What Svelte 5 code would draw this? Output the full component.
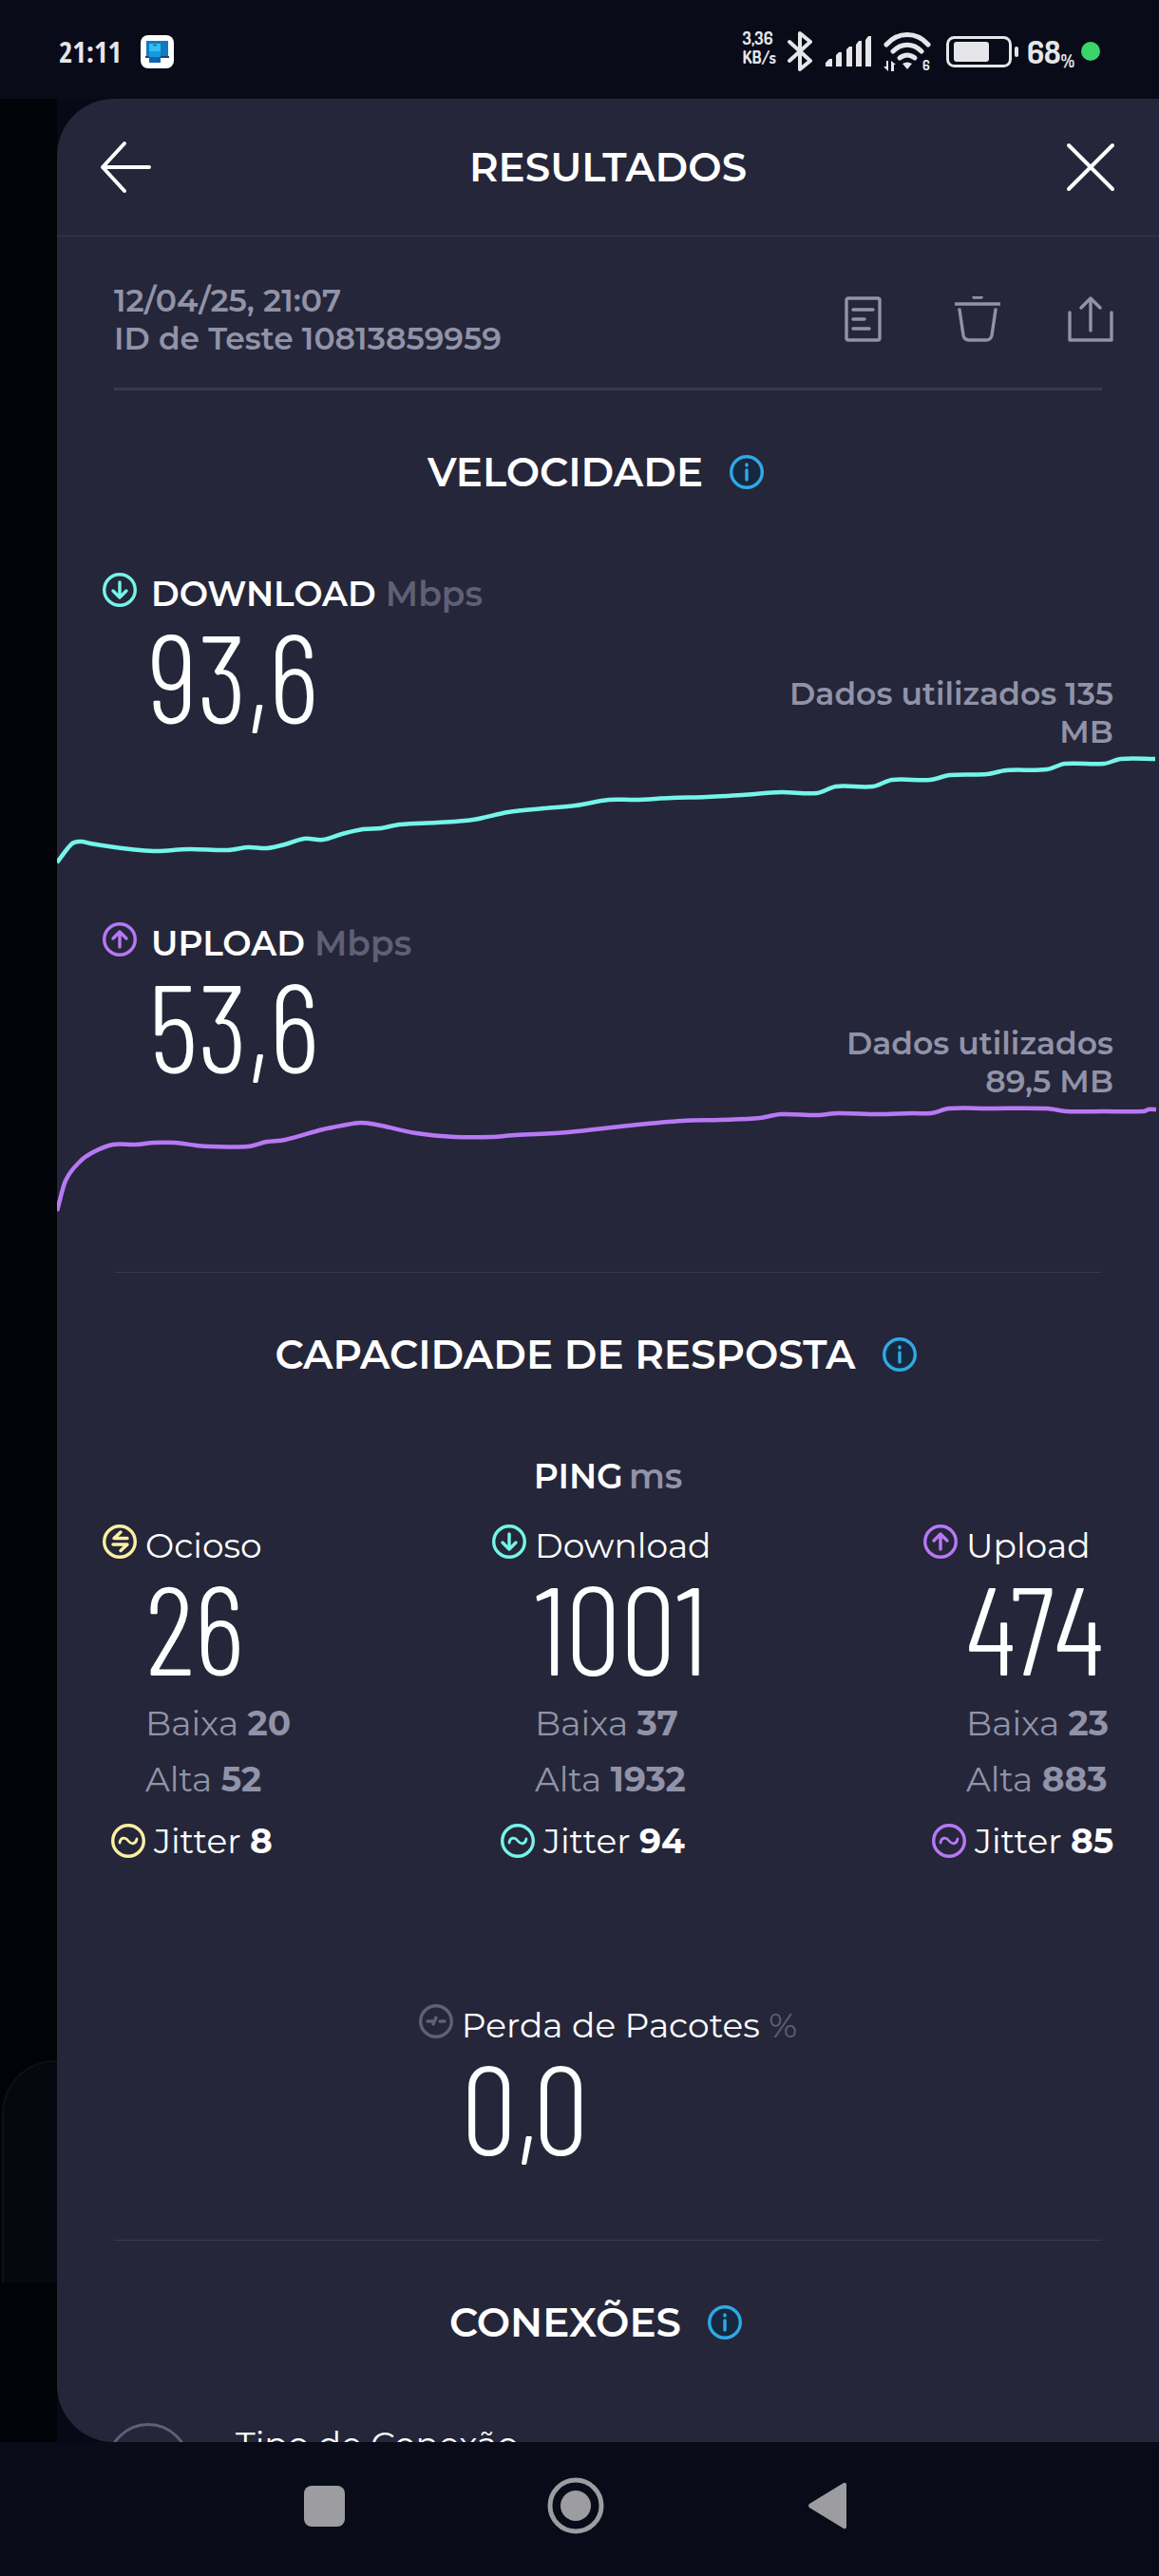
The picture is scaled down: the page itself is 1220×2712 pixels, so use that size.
<script lang="ts">
  type Point = [number, number];
  type Kind = "idle" | "down" | "up";

  const speeds: { kind: Kind; label: string; value: string; data: string; points: Point[] }[] = [
    {
      kind: "down",
      label: "DOWNLOAD",
      value: "93,6",
      data: "Dados utilizados 135 MB",
      points: [
        [0, 118], [16, 98], [26, 96], [35, 98], [61, 102], [87, 105], [106, 106], [139, 104],
        [180, 105], [201, 102], [221, 103], [240, 99], [260, 93], [280, 94], [300, 88], [322, 83],
        [341, 82], [361, 78], [400, 76], [438, 73], [475, 65], [512, 61], [546, 58], [581, 52],
        [609, 52], [647, 50], [684, 49], [721, 47], [762, 44], [800, 45], [820, 38], [859, 38],
        [879, 31], [919, 31], [940, 26], [979, 25], [999, 21], [1042, 20], [1061, 14], [1102, 14],
        [1120, 9], [1156, 9],
      ],
    },
    {
      kind: "up",
      label: "UPLOAD",
      value: "53,6",
      data: "Dados utilizados 89,5 MB",
      points: [
        [0, 117], [9, 85], [24, 65], [38, 55], [59, 47], [83, 47], [102, 45], [124, 45], [147, 48],
        [162, 49], [201, 49], [221, 44], [240, 42], [280, 31], [300, 27], [320, 24], [341, 27],
        [378, 35], [419, 39], [456, 39], [482, 37], [538, 34], [602, 27], [658, 22], [699, 21],
        [740, 19], [762, 15], [800, 16], [822, 14], [863, 15], [900, 14], [920, 14], [939, 9],
        [979, 9], [1042, 9], [1062, 12], [1102, 12], [1144, 12], [1149, 10], [1157, 10],
      ],
    },
  ];

  const pings: { kind: Kind; label: string; value: number; low: number; high: number; jitter: number }[] = [
    { kind: "idle", label: "Ocioso", value: 26, low: 20, high: 52, jitter: 8 },
    { kind: "down", label: "Download", value: 1001, low: 37, high: 1932, jitter: 94 },
    { kind: "up", label: "Upload", value: 474, low: 23, high: 883, jitter: 85 },
  ];

  // rounds the corners a little, flat runs stay flat
  function linePath(points: Point[]) {
    let d = `M${points[0]}`;
    for (let i = 1; i < points.length; i++) {
      const [x0, y0] = points[i - 1];
      const [x1, y1] = points[i];
      const third = (x1 - x0) / 3;
      const slope0 = i > 1 ? (y1 - points[i - 2][1]) / (x1 - points[i - 2][0]) : (y1 - y0) / (x1 - x0);
      const slope1 = i < points.length - 1 ? (points[i + 1][1] - y0) / (points[i + 1][0] - x0) : 0;
      d += `C${x0 + third} ${y0 + slope0 * third} ${x1 - third} ${y1 - slope1 * third} ${x1} ${y1}`;
    }
    return d;
  }
</script>

{#snippet badge(kind: Kind | "muted")}
  <svg class="badge {kind}" viewBox="0 0 36 36" aria-hidden="true">
    <circle cx="18" cy="18" r="16.3" />
    {#if kind === "down"}
      <path d="M18 10v15M11 19l7 7 7-7" />
    {:else if kind === "up"}
      <path d="M18 26V11M11 17l7-7 7 7" />
    {:else if kind === "idle"}
      <path d="M26 14.500H12l7-6.500M11 21h15l-7 6.500" />
    {:else}
      <path d="M9 18h6M15 21l3-7M22 18h5" />
    {/if}
  </svg>
{/snippet}

{#snippet jitterBadge(kind: Kind)}
  <svg class="badge {kind}" viewBox="0 0 36 36" aria-hidden="true">
    <circle cx="18" cy="18" r="16.3" />
    <path class="wave" d="M9 20c1-6 6-6 9-2s8 4 9-2" />
  </svg>
{/snippet}

{#snippet sectionTitle(text: string)}
  <div class="section-title">
    <h2>{text}</h2>
    <button class="info" aria-label="Informações">
      <svg viewBox="0 0 36 36">
        <circle cx="18" cy="18" r="16.3" />
        <path d="M18 16v10M18 10v1" />
      </svg>
    </button>
  </div>
{/snippet}

<div class="phone">
  <div class="status">
    <span class="clock">21:11</span>
    <svg class="app" viewBox="0 0 35 35">
      <rect width="35" height="35" rx="8" fill="#fff" />
      <path d="M6 6h23v17H6z" fill="#1779bd" />
      <path d="M5 22h25v2H5z" fill="#164a78" />
      <path d="M9 9h12v14H9z" fill="#35bdf4" />
      <path d="M9 17h12v6H9z" fill="#159ae2" />
      <path d="M9 23h12v6H9z" fill="#1464ad" />
      <path d="M13 10h4v1h-4z" fill="#164a78" />
    </svg>
    <span class="rate">3,36<br />KB/s</span>
    <svg class="bluetooth" viewBox="0 0 26 42">
      <path d="M2 11l22 20-11 9V2l11 9L2 31" fill="none" stroke="#e6e6ea" stroke-width="4" stroke-linejoin="round" stroke-linecap="round" />
    </svg>
    <svg class="signal" viewBox="0 0 49 32" fill="#e6e6ea">
      <path d="M0 32v-4l4-4h3v8zM11 32V20l3-3h3v15zM22 32V14l3-3h3v21zM32 32V9l3-4h3v27zM42 32V4l3-4h3v32z" />
    </svg>
    <svg class="wifi" viewBox="0 0 50 42">
      <g fill="none" stroke="#e6e6ea" stroke-width="5" stroke-linecap="round">
        <path d="M3 14c12-14 32-14 44 0M10 21c9-9 21-9 30 0" />
        <path d="M17 28c5-4 11-4 16 0" />
      </g>
      <path d="M20 34q5-3 10 0l-5 6z" fill="#e6e6ea" />
      <path d="M5 31v11l-5-5h3v-6zM8 42V31l5 4h-2v7z" fill="#e6e6ea" />
      <text x="41" y="41">6</text>
    </svg>
    <svg class="battery" viewBox="0 0 77 33">
      <rect x="1.500" y="1.500" width="66" height="30" rx="7" fill="none" stroke="#e6e6ea" stroke-width="3" />
      <rect x="8" y="6" width="37" height="21" rx="3" fill="#e6e6ea" />
      <rect x="72" y="11" width="4" height="11" rx="2" fill="#e6e6ea" />
    </svg>
    <span class="percent">68<small>%</small></span>
    <span class="dot"></span>
  </div>

  <div class="stage">
    <div class="behind"></div>
    <main class="sheet">
      <header>
        <button aria-label="Voltar">
          <svg viewBox="0 0 56 56"><path d="M27 3L4 28l23 25M4 28h49" /></svg>
        </button>
        <h1>RESULTADOS</h1>
        <button aria-label="Fechar">
          <svg viewBox="0 0 56 56"><path d="M5 5l46 46M51 5L5 51" /></svg>
        </button>
      </header>

      <div class="meta">
        <p>12/04/25, 21:07<br />ID de Teste 10813859959</p>
        <div class="actions">
          <button aria-label="Detalhes">
            <svg viewBox="0 0 48 48"><path d="M7 2h31q2 0 2 2v40q0 2-2 2H7q-2 0-2-2V4q0-2 2-2zM12 14h21M12 24h12M12 34h17" /></svg>
          </button>
          <button aria-label="Excluir">
            <svg viewBox="0 0 48 48"><path d="M1 8h46M20 1h8M5 14l4 27q1 5 6 5h18q5 0 6-5l4-27" /></svg>
          </button>
          <button aria-label="Compartilhar">
            <svg viewBox="0 0 48 48"><path d="M2 17v29h44V17M24 36V3M14 12L24 2l10 10" /></svg>
          </button>
        </div>
      </div>
      <hr class="thick" />

      <section>
        {@render sectionTitle("VELOCIDADE")}
        <div class="speeds">
          {#each speeds as speed}
            <article>
              <div class="label wide">
                {@render badge(speed.kind)}
                <h3>{speed.label} <span class="unit">Mbps</span></h3>
              </div>
              <div class="reading">
                <span class="number">{speed.value}</span>
                <p class="data">{speed.data}</p>
              </div>
              <svg class="chart {speed.kind}" viewBox="0 0 1160 120" preserveAspectRatio="none" aria-hidden="true">
                <path d={linePath(speed.points)} />
              </svg>
            </article>
          {/each}
        </div>
      </section>
      <hr />

      <section>
        {@render sectionTitle("CAPACIDADE DE RESPOSTA")}
        <h3 class="ping">PING<span>ms</span></h3>
        <div class="pings">
          {#each pings as ping}
            <div>
              <div class="label">
                {@render badge(ping.kind)}
                <span>{ping.label}</span>
              </div>
              <span class="number">{ping.value}</span>
              <p class="range">Baixa <b>{ping.low}</b></p>
              <p class="range">Alta <b>{ping.high}</b></p>
              <div class="label jitter">
                {@render jitterBadge(ping.kind)}
                <span>Jitter <b>{ping.jitter}</b></span>
              </div>
            </div>
          {/each}
        </div>
        <div class="loss">
          <div class="label">
            {@render badge("muted")}
            <span>Perda de Pacotes <span class="unit">%</span></span>
          </div>
          <span class="number">0,0</span>
        </div>
      </section>
      <hr />

      <section>
        {@render sectionTitle("CONEXÕES")}
        <div class="connection">
          <span class="ring"></span>
          <span>Tipo de Conexão</span>
        </div>
      </section>
    </main>
  </div>

  <nav>
    <button aria-label="Recentes">
      <svg viewBox="0 0 60 60"><rect x="9" y="9" width="43" height="43" rx="8" /></svg>
    </button>
    <button aria-label="Início">
      <svg viewBox="0 0 60 60">
        <circle cx="30" cy="30" r="27" fill="none" stroke="#9c9ca1" stroke-width="5" />
        <circle cx="30" cy="30" r="16" />
      </svg>
    </button>
    <button aria-label="Retroceder">
      <svg viewBox="0 0 60 60"><path d="M11 28L47 6q3-1 3 2v44q0 3-3 2L11 32q-2-2 0-4z" /></svg>
    </button>
  </nav>
</div>

<style>
  :global(body) {
    margin: 0;
    background: #090b18;
  }

  .phone {
    height: 100vh;
    display: flex;
    flex-direction: column;
    color: #fff;
    font-family: Montserrat, Inter, sans-serif;
    font-size: 36px;
    line-height: 44px;
  }

  h1,
  h2,
  h3,
  p {
    margin: 0;
    font-size: inherit;
    font-weight: 600;
  }

  button {
    display: flex;
    padding: 0;
    border: 0;
    background: none;
    cursor: pointer;
  }

  svg {
    display: block;
    flex: none;
  }

  hr {
    height: 1px;
    margin: 0 60px;
    border: 0;
    background: #38394d;
  }

  hr.thick {
    height: 3px;
  }

  .status {
    display: flex;
    align-items: center;
    height: 108px;
    margin-bottom: -4px;
    padding: 0 62px;
    box-sizing: border-box;
    color: #e6e6ea;
    font-family: Dosis, "Roboto Condensed", Roboto, sans-serif;
    font-size: 33px;
    font-weight: 700;
  }

  .clock {
    font-family: "Open Sans Condensed", "Roboto Condensed", Roboto, sans-serif;
    font-size: 31px;
  }

  .app {
    width: 35px;
    height: 35px;
    margin-left: 20px;
  }

  .rate {
    margin-left: auto;
    font-size: 18px;
    line-height: 20px;
    padding-bottom: 8px;
  }

  .bluetooth {
    width: 26px;
    height: 42px;
    margin-left: 12px;
  }

  .signal {
    width: 49px;
    height: 32px;
    margin-left: 14px;
  }

  .wifi {
    width: 50px;
    height: 42px;
    margin-left: 12px;
  }

  .wifi text {
    fill: #e6e6ea;
    font-size: 14px;
  }

  .battery {
    width: 77px;
    height: 33px;
    margin-left: 16px;
  }

  .percent {
    margin-left: 8px;
  }

  .percent small {
    font-size: 18px;
    line-height: 20px;
    vertical-align: -4px;
  }

  .dot {
    width: 20px;
    height: 20px;
    margin-left: 7px;
    border-radius: 50%;
    background: #3ad56b;
  }

  .stage {
    position: relative;
    flex: 1;
    min-height: 0;
    padding-left: 60px;
    overflow: hidden;
    background: linear-gradient(90deg, #020308 60px, #080917 60px);
  }

  /* card of the screen underneath, showing at the left edge */
  .behind {
    position: absolute;
    left: 2px;
    bottom: 168px;
    width: 120px;
    height: 234px;
    box-sizing: border-box;
    border: 2px solid #0f1014;
    border-bottom: 0;
    border-radius: 56px 0 0 0;
    background: #07080f;
  }

  .sheet {
    position: relative;
    height: 100%;
    overflow: hidden;
    border-radius: 60px 0 0 60px;
    background: #252639;
  }

  header {
    display: flex;
    align-items: center;
    justify-content: space-between;
    height: 144px;
    padding: 0 44px;
    border-bottom: 1px solid #38394d;
  }

  header svg {
    width: 56px;
    height: 56px;
    fill: none;
    stroke: #fff;
    stroke-width: 4;
    stroke-linecap: round;
    stroke-linejoin: round;
  }

  h1,
  h2 {
    font-size: 42px;
    line-height: 48px;
  }

  .meta {
    display: flex;
    align-items: center;
    justify-content: space-between;
    padding: 47px 48px 32px 60px;
  }

  .meta p,
  .data {
    color: #9193a8;
    font-size: 33px;
    line-height: 40px;
  }

  .actions {
    display: flex;
    gap: 71px;
  }

  .actions svg {
    width: 48px;
    height: 48px;
    fill: none;
    stroke: #9193a8;
    stroke-width: 3.4;
    stroke-linecap: round;
    stroke-linejoin: round;
  }

  .section-title {
    display: flex;
    align-items: center;
    justify-content: center;
    gap: 28px;
    padding: 62px 0 82px;
    margin-right: 26px;
  }

  .info svg {
    width: 36px;
    height: 36px;
    fill: #16283f;
    stroke: #2fa9e6;
    stroke-width: 3.4;
    stroke-linecap: round;
  }

  .label {
    display: flex;
    gap: 9px;
  }

  .label.wide {
    gap: 15px;
    padding-left: 48px;
  }

  .badge {
    width: 36px;
    height: 36px;
    fill: none;
    stroke: currentColor;
    stroke-width: 3.4;
    stroke-linecap: round;
    stroke-linejoin: round;
  }

  .wave {
    stroke-width: 2.8;
  }

  .idle {
    color: #fbf1a2;
  }

  .down {
    color: #74f5ea;
  }

  .up {
    color: #b878f5;
  }

  .muted,
  .unit {
    color: #5f6075;
  }

  .number {
    display: block;
    margin-top: 19px;
    font-family: "Barlow Condensed", "Open Sans Condensed Light", "Roboto Condensed", sans-serif;
    font-size: 131px;
    font-weight: 300;
    line-height: 88px;
  }

  .reading {
    display: flex;
    justify-content: space-between;
    padding: 0 48px 0 96px;
  }

  .reading .number {
    margin-bottom: 36px;
  }

  .data {
    width: 350px;
    align-self: flex-end;
    text-align: right;
  }

  .chart {
    width: 100%;
    height: 120px;
    margin-bottom: 61px;
    fill: none;
    stroke: currentColor;
    stroke-width: 4.5;
  }

  .ping {
    text-align: center;
  }

  .ping span {
    margin-left: 6px;
    color: #9193a8;
  }

  .pings {
    display: grid;
    grid-template-columns: 205fr 227fr 100fr;
    padding: 29px 48px 0;
    white-space: nowrap;
  }

  .pings > div {
    min-width: 0;
  }

  .pings .number,
  .range {
    padding-left: 45px;
  }

  .range {
    margin-top: 15px;
    color: #9193a8;
    font-weight: 400;
  }

  .number + .range {
    margin-top: 36px;
  }

  .jitter {
    align-items: center;
    margin-top: 21px;
    padding-left: 9px;
  }

  .loss {
    width: fit-content;
    margin: 150px auto 97px;
  }

  .loss .number {
    padding-left: 45px;
  }

  .connection {
    display: flex;
    gap: 48px;
    padding-left: 52px;
  }

  .ring {
    width: 88px;
    height: 88px;
    box-sizing: border-box;
    border: 3px solid #5f6075;
    border-radius: 50%;
  }

  nav {
    display: flex;
    align-items: center;
    justify-content: center;
    gap: 205px;
    height: 141px;
    padding: 0 8px 8px 0;
    box-sizing: border-box;
  }

  nav svg {
    width: 60px;
    height: 60px;
    fill: #9c9ca1;
  }
</style>
